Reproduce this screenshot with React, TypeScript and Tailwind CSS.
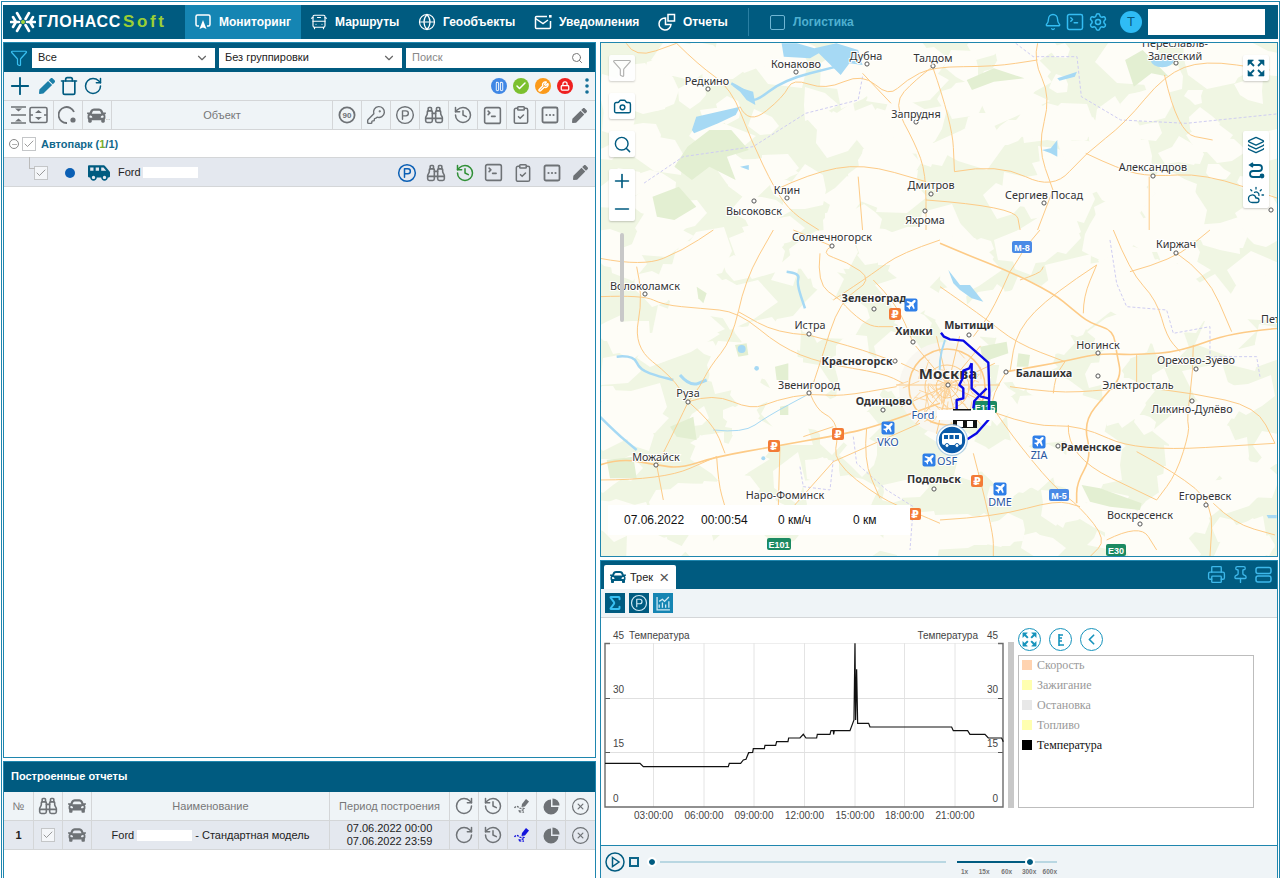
import React from "react";
import {
  Plus, RotateCw, Bell, SquareTerminal, Settings, Search, Camera, Funnel, ChevronDown, Trash,
  Layers, CloudSun, Printer, Pin, History, ClipboardCheck, KeyRound, Binoculars, CircleX, CircleParking,
  Check, Minus, Globe, BusFront, Pause, Wrench, Lock, Sigma, ChevronLeft,
} from "lucide-react";
import { FaCar, FaShuttleVan, FaPen } from "react-icons/fa";

const SANS = "font-['Liberation_Sans',Arial,sans-serif]";

type Pts = number[][];
const P = (pts: Pts) => "M" + pts.map((p) => p.join(" ")).join("L");
const S = (pts: Pts) => {
  let d = `M${pts[0][0]} ${pts[0][1]}`;
  for (let i = 1; i < pts.length - 1; i++) {
    const mx = (pts[i][0] + pts[i + 1][0]) / 2;
    const my = (pts[i][1] + pts[i + 1][1]) / 2;
    d += `Q${pts[i][0]} ${pts[i][1]} ${mx} ${my}`;
  }
  const l = pts[pts.length - 1];
  return d + `L${l[0]} ${l[1]}`;
};

let seed = 7;
const rnd = () => {
  seed = (seed * 16807) % 2147483647;
  return seed / 2147483647;
};
const patches: string[] = [];
for (let i = 0; i < 450; i++) {
  const cx = 600 + rnd() * 680;
  const cy = 40 + rnd() * 520;
  const r = 9 + rnd() * 22;
  const n = 5 + Math.floor(rnd() * 4);
  const pts: string[] = [];
  for (let k = 0; k < n; k++) {
    const a = (k / n) * Math.PI * 2;
    const rr = r * (0.5 + rnd() * 0.7);
    pts.push(`${(cx + Math.cos(a) * rr * 1.2).toFixed(0)},${(cy + Math.sin(a) * rr).toFixed(0)}`);
  }
  patches.push(pts.join(" "));
}
const streets: string[] = [];
for (let i = 0; i < 70; i++) {
  const a = rnd() * Math.PI * 2;
  const d = rnd() * 40;
  const x = 947 + Math.cos(a) * d;
  const y = 387 + Math.sin(a) * d;
  const b = rnd() * Math.PI;
  const l = 6 + rnd() * 14;
  streets.push(`M${x.toFixed(1)} ${y.toFixed(1)}L${(x + Math.cos(b) * l).toFixed(1)} ${(y + Math.sin(b) * l).toFixed(1)}`);
}

const z8: Pts[] = [
  [[0,200],[130,195],[190,225],[300,235],[415,245],[540,350],[665,400],[850,430],[910,460]],
  [[415,245],[435,150],[520,0]],
  [[415,245],[395,330],[330,410],[300,470],[265,515]],
  [[265,515],[340,490],[455,540],[530,510],[630,490],[720,500],[890,470]],
  [[265,515],[340,580],[375,670]],
  [[0,750],[190,750],[350,680]],
  [[630,490],[650,540],[700,565],[715,615],[700,695],[840,805],[950,850],[1020,880]],
  [[700,695],[960,580]],
  [[700,695],[580,830]],
  [[540,650],[535,830]],
  [[170,705],[190,810]],
  [[265,515],[200,650],[170,705]],
  [[0,85],[130,110],[250,60],[340,0]],
  [[110,110],[130,195],[100,350],[215,440],[265,515]],
  [[695,48],[660,70],[740,95],[820,150],[720,210],[660,400],[630,490]],
  [[695,48],[580,0]],
  [[820,150],[890,220],[940,340]],
  [[660,70],[650,160],[720,210]],
  [[1020,30],[900,70],[820,130],[700,210]],
  [[625,315],[530,310],[415,245]],
  [[625,315],[760,350],[885,395]],
  [[350,680],[355,760],[375,830]],
  [[720,210],[790,290],[880,290]],
  [[800,595],[790,690],[840,805]],
  [[610,620],[700,590]],
];
const z8main: Pts[] = [
  [[0,705],[60,685],[170,705],[240,715],[350,680],[520,650],[715,615],[810,595],[1020,520]],
];
const z9: Pts[] = [
  [[210,125],[240,80],[250,60],[300,0]],
  [[210,125],[160,240],[100,320]],
  [[240,150],[300,130],[310,110]],
  [[470,105],[340,190],[230,300],[210,425]],
  [[210,470],[340,490],[500,480],[590,470],[760,490],[950,530],[1005,640]],
  [[340,490],[345,440],[375,395]],
  [[520,0],[570,125],[650,210],[680,320],[720,365]],
  [[570,125],[700,90],[810,0]],
  [[710,70],[800,130],[875,305]],
  [[760,345],[760,420],[740,570],[750,600],[710,730],[650,810]],
  [[430,250],[430,200],[470,105]],
  [[170,550],[280,590],[420,585],[590,665],[1005,640]],
  [[590,665],[710,730],[820,820],[810,980]],
  [[170,550],[210,610],[340,770],[420,830],[500,930],[450,980]],
  [[385,585],[380,680],[650,810]],
  [[0,870],[170,860],[350,810],[420,830]],
  [[100,670],[160,900],[160,980]],
  [[820,820],[880,880],[1005,915]],
  [[500,930],[600,880],[650,960]],
  [[590,375],[590,470]],
  [[0,170],[130,260],[230,340],[375,395]],
  [[200,425],[150,500],[170,550]],
];
const z9main: Pts[] = [
  [[0,40],[70,70],[210,125],[340,190],[400,240],[450,280],[520,300],[530,370],[545,440],[500,490],[430,575],[455,680],[410,760],[410,820]],
  [[1020,295],[880,305],[720,365],[590,375],[475,370],[370,395],[200,425]],
];
const z2: Pts[] = [
  [[175,130],[225,195],[300,265],[345,420],[400,570],[440,640],[500,690]],
  [[320,320],[340,375],[420,290],[440,235],[515,270],[600,220],[660,290],[700,240],[760,200],[900,200],[1000,180]],
  [[600,220],[665,310]],
  [[760,200],[720,240],[670,310],[720,430],[745,520],[745,690]],
  [[760,200],[805,370],[810,515]],
  [[1000,130],[990,180],[1030,290],[1000,440],[1035,570]],
  [[810,515],[910,490],[1035,570],[1110,460],[1200,370],[1290,225],[1380,180],[1530,210]],
  [[1110,460],[1190,510],[1260,530],[1380,520],[1560,600]],
  [[1255,530],[1255,690]],
  [[1035,570],[1000,690]],
  [[400,570],[480,520],[600,490],[745,545]],
  [[590,530],[600,690]],
  [[745,600],[950,620],[960,690]],
  [[60,130],[80,175],[175,130]],
  [[1290,225],[1320,400],[1400,420]],
];
const lilac: Pts[] = [
  [[510,30],[530,160],[560,230],[680,240],[700,310],[810,290],[810,380],[950,380],[960,440]],
];
const lilac2: Pts[] = [
  [[950,130],[990,170],[1090,170],[1100,290],[1190,360],[1340,370],[1560,340]],
  [[600,230],[590,300],[470,340],[350,440],[190,470],[100,550]],
];
const lilac3: Pts[] = [
  [[600,710],[610,770],[690,780],[700,690]],
  [[760,620],[770,700],[860,780],[940,830],[930,960]],
];
const track: Pts[] = [
  [[183,98],[192,110],[210,118],[250,122],[325,188],[328,280],[325,360],[290,400],[262,418]],
  [[275,190],[275,265],[303,290],[325,295]],
  [[320,265],[300,285],[283,303],[280,325]],
  [[275,190],[268,205],[250,212],[248,235],[238,255],[250,265],[250,295],[230,300],[230,330]],
];

const Label = ({ x, y, t, b, s = 10.8, c = "#333", a = "middle" }: { x: number; y: number; t: string; b?: boolean; s?: number; c?: string; a?: "middle" | "start" }) => (
  <text x={x} y={y} textAnchor={a} fontSize={s} fontWeight={b ? 700 : 400} fill={c} stroke="#ffffff" strokeWidth={2} paintOrder="stroke" fontFamily="'Noto Sans','Open Sans',sans-serif">{t}</text>
);

const labels: [number, number, string, boolean?][] = [
  [1175,47,"Переславль-"],[1175,60,"Залесский"],[796,68,"Конаково"],[866,60,"Дубна"],[933,62,"Талдом"],[707,85,"Редкино"],
  [916,118,"Запрудня"],[787,194,"Клин"],[754,215,"Высоковск"],[931,189,"Дмитров"],[925,224,"Яхрома"],[1044,199,"Сергиев Посад"],
  [1153,171,"Александров"],[832,241,"Солнечногорск"],[645,290,"Волоколамск"],[810,329,"Истра"],[874,302,"Зеленоград",true],
  [914,335,"Химки",true],[969,329,"Мытищи",true],[857,365,"Красногорск",true],[1044,377,"Балашиха",true],[1098,349,"Ногинск"],
  [1138,389,"Электросталь"],[1196,364,"Орехово-Зуево"],[1176,248,"Киржач"],[809,389,"Звенигород"],[688,397,"Руза"],[884,405,"Одинцово",true],
  [1192,413,"Ликино-Дулёво"],[1091,451,"Раменское",true],[656,461,"Можайск"],[934,483,"Подольск",true],[785,499,"Наро-Фоминск"],
  [1205,500,"Егорьевск"],[1140,519,"Воскресенск"],
];
const dots: number[][] = [[1176,63],[796,72],[867,64],[933,66],[708,89],[916,122],[787,198],[754,201],[931,194],[925,211],[1044,203],[1153,176],[832,246],[645,294],[809,334],[874,309],[913,342],[969,335],[895,361],[948,385],[1006,372],[1098,353],[1098,376],[1196,369],[1176,253],[809,393],[688,402],[883,410],[1192,401],[1058,446],[656,465],[934,489],[1206,505],[1140,524],[1271,210]];

const Plane = ({ x, y }: { x: number; y: number }) => (
  <g transform={`translate(${x} ${y})`}>
    <rect x={-6.5} y={-6.5} width={13} height={13} rx={2} fill="#2f7fe8" />
    <path d="M4.5-4.5c-.8-.8-1.7-.4-2.4.3L.6-2.7-3.6-4l-.9.9 3.4 2.2L-2.8.8-4.2.6l-.7.7 2.1 1.2L-1.6 4.6l.7-.7-.2-1.4L.6.8 2.8 4.2l.9-.9L2.4-.9l1.5-1.5c.7-.7 1.1-2.3.6-2.1z" fill="#fff" />
  </g>
);
const Rub = ({ x, y }: { x: number; y: number }) => (
  <g transform={`translate(${x} ${y})`}>
    <rect x={-6} y={-6} width={12} height={12} rx={2} fill="#f37b36" />
    <text x={0} y={4} textAnchor="middle" fontSize={11} fontWeight={700} fill="#fff" fontFamily="'DejaVu Sans',sans-serif">₽</text>
  </g>
);
const Shield = ({ x, y, t, c, w = 20 }: { x: number; y: number; t: string; c: string; w?: number }) => (
  <g transform={`translate(${x} ${y})`}>
    <rect x={-w / 2} y={-6} width={w} height={12} rx={2} fill={c} />
    <text x={0} y={3.5} textAnchor="middle" fontSize={9} fontWeight={700} fill="#fff" fontFamily="'Liberation Sans',sans-serif">{t}</text>
  </g>
);

const Roads = ({ list, t, w = 1 }: { list: Pts[]; t: string; w?: number }) => (
  <g transform={t}>
    {list.map((p, i) => (
      <path key={i} d={S(p)} fill="none" stroke="#fdcb87" strokeWidth={w} strokeLinejoin="round" vectorEffect="non-scaling-stroke" />
    ))}
  </g>
);
const Dash = ({ list, t }: { list: Pts[]; t: string }) => (
  <g transform={t}>
    {list.map((p, i) => (
      <path key={i} d={P(p)} fill="none" stroke="#cfcdf2" strokeWidth={1} strokeDasharray="3 2" vectorEffect="non-scaling-stroke" />
    ))}
  </g>
);

const T8 = "translate(600 230) scale(.3333)";
const T9 = "translate(940 230) scale(.3333)";
const T2 = "translate(600 0) scale(.4376 .3333)";

function MapDrawing() {
  const spokes: React.ReactNode[] = [];
  for (let i = 0; i < 14; i++) {
    const a = (i / 14) * Math.PI * 2;
    spokes.push(<line key={i} x1={948} y1={385} x2={948 + Math.cos(a) * 52} y2={385 + Math.sin(a) * 50} stroke="#fdcb87" strokeWidth={1} />);
  }
  return (
    <svg viewBox="601 43 676 513" className="block w-full h-full">
      <rect x={600} y={43} width={678} height={515} fill="#f0f6e3" />
      {patches.map((p, i) => (
        <polygon key={i} points={p} fill="#fefdf7" />
      ))}
      <g fill="#e3efd2">
        <g transform={T2}>
          <polygon points="838,240 900,205 970,235 900,245 850,270" />
          <polygon points="1200,180 1240,150 1300,230 1260,220 1220,260" />
          <polygon points="200,440 250,390 300,390 340,450 290,470 310,540 250,500 210,540 170,500" />
          <polygon points="120,590 180,560 220,620 170,660 130,650" />
        </g>
        <g transform={T8}>
          <polygon points="20,690 100,680 110,745 30,745" />
          <polygon points="210,590 280,560 290,630 230,620" />
          <polygon points="525,410 565,400 565,450 530,450" />
          <polygon points="540,530 565,525 565,555 540,555" />
          <polygon points="290,170 320,190 310,220 295,205" />
          <polygon points="405,345 440,340 445,375 415,380" />
        </g>
        <g transform={T9}>
          <polygon points="425,765 480,775 605,820 600,840 510,830 450,815" />
          <polygon points="120,350 200,335 205,370 130,395" />
          <polygon points="235,370 270,375 265,410 230,410" />
        </g>
      </g>
      <ellipse cx={945} cy={388} rx={46} ry={46} fill="#f9f7f1" />
      <Dash list={lilac} t={T9} />
      <Dash list={lilac2} t={T2} />
      <Dash list={lilac3} t={T8} />
      <g fill="#a6d9f4" stroke="none">
        <g transform={T2}>
          <polygon points="210,390 220,350 320,320 310,345 270,370 215,400" />
          <polygon points="415,130 420,170 480,175 500,160 550,225 570,190 600,195 590,150 540,130 490,145 450,130" />
          <polygon points="300,255 350,275 355,315 335,300 320,275" />
          <ellipse cx={1285} cy={182} rx={26} ry={20} />
          <polygon points="1045,235 1090,215 1085,230 1050,242" />
          <polygon points="1010,450 1030,445 1045,420 1045,470 1030,460" />
          <polygon points="320,500 340,495 340,510" />
        </g>
        <g transform={T8}>
          <circle cx={425} cy={357} r={12} />
          <circle cx={470} cy={415} r={7} />
          <circle cx={490} cy={685} r={6} />
        </g>
        <g transform={T9}>
          <polygon points="25,120 60,165 90,165 130,215 95,205 60,180 40,160" />
          <polygon points="980,855 1010,855 1010,865 985,865" />
        </g>
      </g>
      <g transform={T8} fill="none" stroke="#a6d9f4">
        <path d={S([[0,560],[50,610],[110,660]])} vectorEffect="non-scaling-stroke" strokeWidth={2.5} />
        <path d={S([[50,380],[100,375],[120,420],[180,440],[220,450]])} vectorEffect="non-scaling-stroke" strokeWidth={2.5} />
        <path d={S([[240,435],[270,470],[320,450]])} vectorEffect="non-scaling-stroke" strokeWidth={3} />
        <path d={S([[560,125],[600,130],[590,160],[615,235]])} vectorEffect="non-scaling-stroke" strokeWidth={2.5} />
        <path d={S([[340,600],[430,610],[500,560],[630,490]])} vectorEffect="non-scaling-stroke" strokeWidth={1} />
      </g>
      <g transform={T2} fill="none" stroke="#a6d9f4">
        <path d={S([[300,250],[345,280],[350,310],[420,240],[540,200]])} vectorEffect="non-scaling-stroke" strokeWidth={2.5} />
      </g>
      <Roads list={z8} t={T8} />
      <Roads list={z9} t={T9} />
      <Roads list={z2} t={T2} />
      <Roads list={z8main} t={T8} w={1.6} />
      <Roads list={z9main} t={T9} w={1.6} />
      {spokes}
      <path d={streets.join("")} fill="none" stroke="#fdd49c" strokeWidth={0.9} />
      <circle cx={947} cy={387} r={38} fill="none" stroke="#fdcb87" strokeWidth={1.6} />
      <circle cx={947} cy={387} r={22} fill="none" stroke="#fdcb87" strokeWidth={1} />
      <circle cx={947} cy={387} r={11} fill="none" stroke="#fdcb87" strokeWidth={1} />
      <path d="M945 340 q-8 22 -4 40" fill="none" stroke="#a6d9f4" strokeWidth={2} />
      {dots.map(([x, y], i) => (
        <circle key={i} cx={x} cy={y} r={2.1} fill="#fff" stroke="#555" strokeWidth={1} />
      ))}
      {labels.map(([x, y, t, b], i) => (
        <Label key={i} x={x} y={y} t={t} b={b} />
      ))}
      <Label x={948} y={379} t="Москва" b s={15} />
      <Label x={1261} y={323} t="Пет" a="start" />
      <Label x={923} y={419} t="Ford" c="#28569f" />
      <Label x={888} y={446} t="VKO" c="#28569f" />
      <Label x={947} y={465} t="OSF" c="#28569f" />
      <Label x={1039} y={459} t="ZIA" c="#28569f" />
      <Label x={1000} y={506} t="DME" c="#28569f" />
      <Plane x={911} y={305} />
      <Plane x={888} y={428} />
      <Plane x={929} y={460} />
      <Plane x={1039} y={442} />
      <Plane x={1000} y={489} />
      <Rub x={895} y={314} />
      <Rub x={838} y={434} />
      <Rub x={774} y={446} />
      <Rub x={915} y={514} />
      <Rub x={977} y={481} />
      <Shield x={1022} y={247} t="M-8" c="#4a8ae6" />
      <Shield x={1059} y={495} t="M-5" c="#4a8ae6" />
      <Shield x={779} y={544} t="E101" c="#1b8a62" w={24} />
      <Shield x={1116} y={550} t="E30" c="#1b8a62" />
      <Shield x={985} y={407} t="E115" c="#1b8a62" w={24} />
      <g transform="translate(880 300) scale(.3333)">
        {track.map((p, i) => (
          <path key={i} d={P(p)} fill="none" stroke="#0a0ae6" strokeWidth={2.4} strokeLinejoin="round" vectorEffect="non-scaling-stroke" />
        ))}
      </g>
      <rect x={937} y={410} width={58} height={10} fill="#fff" />
      <rect x={953} y={420} width={24} height={8} fill="#111" />
      <rect x={957} y={421} width={6} height={6} fill="#fff" />
      <rect x={967} y={421} width={6} height={6} fill="#fff" />
      <rect x={953} y={409} width={18} height={1.5} fill="#111" />
      <circle cx={952} cy={440} r={16} fill="#9cc3e6" fillOpacity={0.75} />
      <circle cx={952} cy={440} r={14} fill="#0a5aa8" stroke="#fff" strokeWidth={1.5} />
      <g transform="translate(942 433)" fill="#fff">
        <rect x={0} y={0} width={20} height={12} rx={2.5} />
        <circle cx={5} cy={12.5} r={2} stroke="#0a5aa8" />
        <circle cx={15} cy={12.5} r={2} stroke="#0a5aa8" />
        <rect x={2} y={2} width={4} height={4} fill="#0a5aa8" />
        <rect x={7.5} y={2} width={4} height={4} fill="#0a5aa8" />
        <rect x={13} y={2} width={4} height={4} fill="#0a5aa8" />
      </g>
    </svg>
  );
}

const chart = [[15,430],[120,430],[130,440],[385,440],[388,430],[422,430],[430,420],[438,418],[446,398],[458,397],[460,386],[493,386],[495,376],[527,376],[530,365],[564,365],[566,354],[600,354],[610,343],[618,354],[650,354],[652,343],[690,343],[693,332],[700,332],[701,343],[703,332],[750,332],[762,300],[765,70],[767,300],[770,148],[773,310],[806,310],[810,321],[1055,321],[1060,332],[1103,332],[1110,343],[1155,343],[1165,354],[1205,354],[1210,365]];

function Chart() {
  const xs = [653.5, 704, 754, 804.5, 855, 904.5, 955];
  const tl = ["03:00:00", "06:00:00", "09:00:00", "12:00:00", "15:00:00", "18:00:00", "21:00:00"];
  const F = { fontFamily: "'Liberation Sans',sans-serif", fontSize: 10, fill: "#444" };
  return (
    <svg width={412} height={206} viewBox="600 620 412 206" className="block shrink-0">
      <rect x={605} y={643} width={398} height={1} fill="#eee" />
      {xs.map((x) => (
        <line key={x} x1={x} x2={x} y1={643} y2={807} stroke="#e4e4e4" />
      ))}
      {[698.5, 752.5].map((y) => (
        <g key={y}>
          <line x1={605} x2={1003} y1={y} y2={y} stroke="#e0e0e0" />
          <line x1={605} x2={610} y1={y} y2={y} stroke="#555" />
          <line x1={998} x2={1003} y1={y} y2={y} stroke="#555" />
        </g>
      ))}
      <path d="M610 643.5H605V807H1003V643.5H998" fill="none" stroke="#6c6c6c" strokeWidth={1.4} />
      <g transform="translate(600 620) scale(.3333)">
        <path d={P(chart)} fill="none" stroke="#111" strokeWidth={1.2} vectorEffect="non-scaling-stroke" />
      </g>
      <text x={613} y={639} {...F}>45</text>
      <text x={629} y={639} {...F}>Температура</text>
      <text x={978} y={639} textAnchor="end" {...F}>Температура</text>
      <text x={998} y={639} textAnchor="end" {...F}>45</text>
      {[["30", 693], ["15", 747], ["0", 802]].map(([t, y]) => (
        <g key={t as string}>
          <text x={613} y={y as number} {...F}>{t}</text>
          <text x={998} y={y as number} textAnchor="end" {...F}>{t}</text>
        </g>
      ))}
      {xs.map((x, i) => (
        <text key={x} x={x} y={819} textAnchor="middle" {...F}>{tl[i]}</text>
      ))}
    </svg>
  );
}

const G = "#6e7276";
const DotsBox = ({ c = G, s = 18 }: { c?: string; s?: number }) => (
  <svg width={s} height={s} viewBox="0 0 18 18" fill="none">
    <rect x={1.5} y={1.5} width={15} height={15} rx={1.5} stroke={c} strokeWidth={1.8} />
    <circle cx={5.5} cy={9} r={1.1} fill={c} /><circle cx={9} cy={9} r={1.1} fill={c} /><circle cx={12.5} cy={9} r={1.1} fill={c} />
  </svg>
);
const Speed90 = () => (
  <svg width={18} height={18} viewBox="0 0 18 18">
    <circle cx={9} cy={9} r={7.6} fill="none" stroke={G} strokeWidth={1.8} />
    <text x={9} y={11.8} textAnchor="middle" fontSize={8} fontWeight={700} fill={G} fontFamily="'Liberation Sans',sans-serif">90</text>
  </svg>
);
const PieIcon = () => (
  <svg width={17} height={17} viewBox="0 0 17 17" fill={G}>
    <path d="M8 1.5A7.5 7.5 0 1 0 15.5 9H8z" /><path d="M9.5 0.5V7.5H16.5A7 7 0 0 0 9.5 .5z" />
  </svg>
);
const MapPen = ({ c = G }: { c?: string }) => (
  <svg width={18} height={18} viewBox="0 0 18 18" fill="none">
    <path d="M9 7l4-5 3 2.5-4 5-3.5.5z" fill={c} />
    <path d="M1.5 11c2-3 3.5-1 5 0s3-.5 4.5.5-3 2-5 2.5 3 1.5 5 1" stroke={c} strokeWidth={1.3} strokeDasharray="2 1" />
  </svg>
);

const Cell = ({ className = "w-[29px]", children }: { className?: string; children?: React.ReactNode }) => (
  <div className={`${className} shrink-0 h-full flex items-center justify-center border-r border-[#d4d6d8]`}>{children}</div>
);

const CheckBox = () => (
  <span className="w-[14px] h-[14px] bg-white/60 border border-[#c4c6c8] flex items-center justify-center shrink-0">
    <Check size={12} color="#666" strokeWidth={1.3} />
  </span>
);

const Dot = ({ c, children }: { c: string; children: React.ReactNode }) => (
  <span className={`w-4 h-4 rounded-full flex items-center justify-center ${c}`}>{children}</span>
);

const NavItem = ({ icon, label, className = "" }: { icon: React.ReactNode; label: string; className?: string }) => (
  <div className={`h-full flex items-center gap-[7px] text-white font-bold text-[12px] ${className}`}>
    {icon}
    <span>{label}</span>
  </div>
);

const MonitorIcon = () => (
  <svg width={18} height={18} viewBox="0 0 18 18" fill="none" stroke="#fff" strokeWidth={1.5}>
    <path d="M5 13H3.5A1.5 1.5 0 0 1 2 11.5v-8A1.5 1.5 0 0 1 3.5 2h11A1.5 1.5 0 0 1 16 3.5v8a1.5 1.5 0 0 1-1.5 1.5H13" />
    <path d="M9 7l3.5 9L9 14.5 5.5 16z" fill="#fff" stroke="none" />
  </svg>
);
const MailIcon = () => (
  <svg width={18} height={18} viewBox="0 0 18 18" fill="none" stroke="#fff" strokeWidth={1.5}>
    <path d="M13 3.5H2.5A1 1 0 0 0 1.5 4.5v10a1 1 0 0 0 1 1h13a1 1 0 0 0 1-1V8" />
    <path d="M1.5 5.5L9 10.5l5-3.5" />
    <rect x={15} y={2} width={2.6} height={2.6} fill="#fff" stroke="none" />
  </svg>
);
const ReportIcon = () => (
  <svg width={18} height={18} viewBox="0 0 18 18" fill="none" stroke="#fff" strokeWidth={1.5}>
    <path d="M7.5 5A6 6 0 1 0 13 11.5H7.5z" />
    <rect x={10} y={1.5} width={6.5} height={6.5} />
  </svg>
);

const MapBtn = ({ children, className = "" }: { children: React.ReactNode; className?: string }) => (
  <div className={`w-[26px] bg-white rounded-[2px] shadow-[0_1px_2px_rgba(0,0,0,0.2)] flex flex-col items-center justify-center ${className}`}>{children}</div>
);

const BLUE = "#005b80";

const Expand = ({ c = BLUE, s = 18, w = 1.8 }: { c?: string; s?: number; w?: number }) => (
  <svg width={s} height={s} viewBox="0 0 18 18" fill={c} stroke={c} strokeWidth={w}>
    <path d="M1 6.5V1h5.5zM17 6.5V1h-5.5zM1 11.5V17h5.5zM17 11.5V17h-5.5z" strokeWidth={0.6} />
    <path d="M3 3l4 4M15 3l-4 4M3 15l4-4M15 15l-4-4" />
  </svg>
);

const Logo = () => (
  <svg width={26} height={22} viewBox="0 0 26 22" fill="none" stroke="#fff" strokeWidth={2.6} strokeLinecap="round">
    <path d="M1 11h8M17 11h8M7 2l3.5 6M15.5 14l3.5 6M19 2l-3.5 6M10.5 14L7 20M3 6l3 5-3 5M23 6l-3 5 3 5" />
    <circle cx={13} cy={11} r={2} fill="#a5d63a" stroke="none" />
  </svg>
);

const Track = () => (
  <div className="h-[28px] shrink-0 bg-[#005b80] flex items-end pl-[3px] pr-[5px]">
    <div className="h-[24px] w-[72px] bg-white rounded-t-[2px] flex items-center pl-[6px] gap-[4px] text-[11px] text-[#222]">
      <FaCar size={16} color={BLUE} />
      <span>Трек</span>
      <span className="text-[17px] text-[#555] leading-none ml-[2px]">×</span>
    </div>
    <div className="ml-auto h-full flex items-center gap-[5px] pb-[1px]">
      <Printer size={19} color="#3db8ea" strokeWidth={1.7} />
      <Pin size={19} color="#3db8ea" strokeWidth={1.7} />
      <svg width={17} height={17} viewBox="0 0 17 17" fill="none" stroke="#3db8ea" strokeWidth={1.5}>
        <rect x={1} y={1.5} width={15} height={6} rx={2} /><rect x={1} y={10} width={15} height={6} rx={2} />
      </svg>
    </div>
  </div>
);

const CircleBtn = ({ children }: { children: React.ReactNode }) => (
  <span className="w-[23px] h-[23px] rounded-full border-[1.5px] border-[#1693bc] flex items-center justify-center bg-white">{children}</span>
);

const legend: [string, string, string][] = [
  ["Скорость", "bg-[#ffd3b0]", "text-[#999]"],
  ["Зажигание", "bg-[#ffffb0]", "text-[#999]"],
  ["Остановка", "bg-[#e8e8e8]", "text-[#999]"],
  ["Топливо", "bg-[#ffffb0]", "text-[#999]"],
  ["Температура", "bg-black", "text-[#111]"],
];

const HistoryI = ({ c = G, s = 20 }: { c?: string; s?: number }) => <History size={s} color={c} strokeWidth={1.8} />;

export default function App() {
  return (
    <div className={`w-[1283px] h-[878px] bg-white overflow-hidden ${SANS}`}>
      <div className="ml-px mt-px w-[1279px] h-[877px] border border-b-0 border-[#1f86ae] pt-[3px] px-px flex flex-col">
        {/* header */}
        <header className="h-[34px] shrink-0 bg-[#005b80] flex items-center">
          <div className="w-[182px] h-full flex items-center pl-[7px] gap-[2px]">
            <Logo />
            <span className="text-white font-bold text-[16px] tracking-[0.7px]">ГЛОНАСС</span>
            <span className="text-[#9ccf35] font-bold text-[17px] tracking-[2.6px]">Soft</span>
          </div>
          <NavItem className="w-[116px] pl-[9px] bg-[#1585b3]" icon={<MonitorIcon />} label="Мониторинг" />
          <NavItem className="w-[108px] pl-[9px]" icon={<BusFront size={18} strokeWidth={1.5} />} label="Маршруты" />
          <NavItem className="w-[116px] pl-[9px]" icon={<Globe size={18} strokeWidth={1.6} />} label="Геообъекты" />
          <NavItem className="w-[124px] pl-[9px]" icon={<MailIcon />} label="Уведомления" />
          <NavItem className="w-[99px] pl-[9px]" icon={<ReportIcon />} label="Отчеты" />
          <div className="w-px h-[28px] bg-[#2a7fa3]" />
          <div className="ml-[21px] w-[15px] h-[15px] border-[1.5px] border-[#6fb6d4] rounded-[2px]" />
          <span className="ml-[8px] text-[#4fb0d0] font-bold text-[12px]">Логистика</span>
          <div className="ml-auto flex items-center">
            <div className="flex items-center gap-[3px]">
              <Bell size={18} color="#34bdf2" strokeWidth={1.8} />
              <SquareTerminal size={20} color="#34bdf2" strokeWidth={1.8} />
              <Settings size={20} color="#34bdf2" strokeWidth={1.8} />
            </div>
            <div className="ml-[12px] w-[22px] h-[22px] rounded-full bg-[#2fbcf5] text-[#075a7d] text-[13px] flex items-center justify-center">T</div>
            <div className="ml-[6px] mr-[13px] w-[117px] h-[26px] bg-white" />
          </div>
        </header>

        <div className="mt-[3px] flex-1 min-h-0 flex gap-[4px] overflow-hidden">
          {/* left */}
          <div className="w-[593px] shrink-0 flex flex-col gap-[3px]">
            <section className="h-[716px] border border-[#1f86ae] flex flex-col bg-white">
              <div className="h-[29px] shrink-0 bg-[#005b80] flex items-center pl-[6px] gap-[4px] text-[11px] text-[#222]">
                <Funnel size={18} color="#39c0f2" strokeWidth={1.6} />
                <div className="w-[183px] h-[20px] bg-white flex items-center justify-between px-[6px]">
                  <span>Все</span><ChevronDown size={14} color="#666" />
                </div>
                <div className="w-[183px] h-[20px] bg-white flex items-center justify-between px-[6px]">
                  <span>Без группировки</span><ChevronDown size={14} color="#666" />
                </div>
                <div className="w-[183px] h-[20px] bg-white flex items-center justify-between px-[6px] text-[#888]">
                  <span>Поиск</span><Search size={12} color="#777" />
                </div>
              </div>
              <div className="h-[28px] shrink-0 bg-[#eff4f7] flex items-center pl-[6px] pr-[5px]">
                <div className="flex items-center">
                  <Plus size={28} color={BLUE} strokeWidth={1.6} className="-mx-[4px]" />
                  <FaPen size={16} color="#1b7fa8" className="ml-[9px]" />
                  <Trash size={20} color={BLUE} strokeWidth={2} className="ml-[4px]" />
                  <RotateCw size={20} color={BLUE} strokeWidth={1.8} className="ml-[4px]" />
                </div>
                <div className="ml-auto flex items-center gap-[6px]">
                  <Dot c="bg-[#3f87e5]"><Pause size={11} color="#fff" /></Dot>
                  <Dot c="bg-[#7cc02f]"><Check size={12} color="#fff" strokeWidth={3} /></Dot>
                  <Dot c="bg-[#fb9a1a]"><Wrench size={11} color="#fff" strokeWidth={3} /></Dot>
                  <Dot c="bg-[#ee2020]"><Lock size={10} color="#fff" strokeWidth={3} /></Dot>
                  <svg width={6} height={18} viewBox="0 0 6 18" fill="#146f97" className="ml-[5px]">
                    <circle cx={3} cy={3} r={1.8} /><circle cx={3} cy={9} r={1.8} /><circle cx={3} cy={15} r={1.8} />
                  </svg>
                </div>
              </div>
              <div className="h-[30px] shrink-0 bg-[#eff4f7] border-y border-[#d4d6d8] flex items-center text-[11px] text-[#777]">
                <Cell className="w-[50px]">
                  <svg width={38} height={18} viewBox="0 0 38 18" fill="none" stroke={G} strokeWidth={1.6}>
                    <path d="M1 1h15M1 17h15M1 9h15" /><path d="M5 2.5l3.5 3L12 2.5zM5 15.5l3.5-3 3.5 3z" fill={G} stroke="none" />
                    <rect x={20} y={1.5} width={17} height={15} rx={1.5} />
                    <path d="M25 7l3.5-3L32 7zM25 11l3.5 3L32 11z" fill={G} stroke="none" />
                    <path d="M20 9h3M34 9h3" />
                  </svg>
                </Cell>
                <Cell>
                  <svg width={20} height={20} viewBox="0 0 20 20" fill="none" stroke={G} strokeWidth={1.8}>
                    <path d="M16 7A8 8 0 1 0 9 18" /><circle cx={15} cy={15} r={2.6} fill={G} stroke="none" />
                  </svg>
                </Cell>
                <Cell><FaCar size={19} color={G} /><span className="text-[8px] text-[#999] leading-none mt-[6px] -mr-[3px]">..</span></Cell>
                <Cell className="w-[221px]">Объект</Cell>
                <Cell><Speed90 /></Cell>
                <Cell><KeyRound size={20} color={G} strokeWidth={1.7} /></Cell>
                <Cell><CircleParking size={20} color={G} strokeWidth={1.7} /></Cell>
                <Cell><Binoculars size={20} color={G} strokeWidth={1.9} /></Cell>
                <Cell><HistoryI /></Cell>
                <Cell><SquareTerminal size={21} color={G} strokeWidth={1.8} /></Cell>
                <Cell><ClipboardCheck size={20} color={G} strokeWidth={1.8} /></Cell>
                <Cell><DotsBox /></Cell>
                <Cell className="w-[29px] border-r-0"><FaPen size={15} color={G} /></Cell>
              </div>
              <div className="h-[28px] shrink-0 border-b border-[#d4d6d8] flex items-center pt-px pl-[5px] gap-[3px] text-[11px] font-bold text-[#12688c]">
                <span className="w-[10px] h-[10px] rounded-full border border-[#888] flex items-center justify-center">
                  <Minus size={7} color="#777" />
                </span>
                <CheckBox />
                <span className="ml-[2px]">Автопарк (<span className="text-[#79ad2d]">1</span>/1)</span>
              </div>
              <div className="relative h-[29px] shrink-0 bg-[#e4e8ef] border-b border-[#d4d6d8] flex items-center pt-px text-[11px] text-[#222]">
                <span className="absolute left-[25px] -top-[1px] w-[6px] h-[12px] border-l border-b border-[#bbb]" />
                <div className="ml-[30px]"><CheckBox /></div>
                <span className="ml-[17px] w-[10px] h-[10px] rounded-full bg-[#0b5fb4]" />
                <FaShuttleVan size={22} color={BLUE} className="ml-[13px]" />
                <span className="ml-[8px]">Ford</span>
                <span className="ml-[2px] w-[55px] h-[11px] bg-white" />
                <div className="ml-auto flex items-center h-full">
                  <Cell className="w-[29px] border-r-0"><CircleParking size={20} color="#0b5fb4" strokeWidth={1.8} /></Cell>
                  <Cell className="w-[29px] border-r-0"><Binoculars size={20} color={G} strokeWidth={1.9} /></Cell>
                  <Cell className="w-[29px] border-r-0"><HistoryI c="#2f8f35" /></Cell>
                  <Cell className="w-[29px] border-r-0"><SquareTerminal size={21} color={G} strokeWidth={1.8} /></Cell>
                  <Cell className="w-[29px] border-r-0"><ClipboardCheck size={20} color={G} strokeWidth={1.8} /></Cell>
                  <Cell className="w-[29px] border-r-0"><DotsBox /></Cell>
                  <Cell className="w-[29px] border-r-0"><FaPen size={15} color={G} /></Cell>
                </div>
              </div>
            </section>
            <section className="flex-1 border border-[#1f86ae] border-b-0 flex flex-col bg-white">
              <div className="h-[30px] shrink-0 bg-[#005b80] flex items-center pl-[7px] pb-px text-white font-bold text-[11px]">Построенные отчеты</div>
              <div className="h-[29px] shrink-0 bg-[#eff4f7] border-b border-[#d4d6d8] flex items-center text-[11px] text-[#777]">
                <Cell className="w-[30px]">№</Cell>
                <Cell><Binoculars size={20} color={G} strokeWidth={1.9} /></Cell>
                <Cell><FaCar size={18} color={G} /></Cell>
                <Cell className="w-[238px]">Наименование</Cell>
                <Cell className="w-[120px]">Период построения</Cell>
                <Cell><RotateCw size={20} color={G} strokeWidth={1.8} /></Cell>
                <Cell><HistoryI /></Cell>
                <Cell><MapPen /></Cell>
                <Cell><PieIcon /></Cell>
                <Cell className="w-[29px] border-r-0"><CircleX size={19} color={G} strokeWidth={1.5} /></Cell>
              </div>
              <div className="h-[29px] shrink-0 bg-[#e4e8ef] border-b border-[#d4d6d8] flex items-center text-[11px] text-[#222]">
                <Cell className="w-[30px]"><span className="font-bold">1</span></Cell>
                <Cell><CheckBox /></Cell>
                <Cell><FaCar size={18} color={G} /></Cell>
                <Cell className="w-[238px]">
                  <span>Ford</span><span className="mx-[3px] w-[55px] h-[11px] bg-white" /><span>- Стандартная модель</span>
                </Cell>
                <Cell className="w-[120px]">
                  <div className="text-center leading-[13px]">07.06.2022 00:00<br />07.06.2022 23:59</div>
                </Cell>
                <Cell><RotateCw size={20} color={G} strokeWidth={1.8} /></Cell>
                <Cell><HistoryI /></Cell>
                <Cell><MapPen c="#1414dc" /></Cell>
                <Cell><PieIcon /></Cell>
                <Cell className="w-[29px] border-r-0"><CircleX size={19} color={G} strokeWidth={1.5} /></Cell>
              </div>
            </section>
          </div>

          {/* right */}
          <div className="flex-1 min-w-0 flex flex-col gap-[3px]">
            <section className="relative h-[515px] shrink-0 border border-[#1f86ae] overflow-hidden">
              <MapDrawing />
              <div className="absolute left-[8px] top-[12px] flex flex-col gap-[12px]">
                <MapBtn className="h-[26px] opacity-90"><Funnel size={20} color="#aaa" strokeWidth={1.4} /></MapBtn>
                <MapBtn className="h-[26px]"><Camera size={19} color={BLUE} strokeWidth={1.8} /></MapBtn>
                <MapBtn className="h-[26px]"><Search size={19} color={BLUE} strokeWidth={1.8} /></MapBtn>
                <MapBtn className="h-[52px] gap-[6px]"><Plus size={22} color={BLUE} strokeWidth={1.8} /><Minus size={22} color={BLUE} strokeWidth={1.8} /></MapBtn>
              </div>
              <div className="absolute left-[19px] top-[190px] w-[4px] h-[89px] bg-[#c8c8c8] rounded-[2px]" />
              <div className="absolute right-[8px] top-[12px]"><MapBtn className="h-[26px]"><Expand /></MapBtn></div>
              <div className="absolute right-[8px] top-[88px]">
                <MapBtn className="h-[77px] gap-[7px]">
                  <Layers size={18} color={BLUE} strokeWidth={1.7} />
                  <svg width={18} height={18} viewBox="0 0 18 18" fill="none" stroke={BLUE} strokeWidth={1.8}>
                    <path d="M6 2L3 4l3 2M3 4h9a3 3 0 0 1 0 6H6a3 3 0 0 0 0 6h7" /><circle cx={15} cy={15} r={1.5} fill={BLUE} />
                  </svg>
                  <CloudSun size={18} color={BLUE} strokeWidth={1.7} />
                </MapBtn>
              </div>
              <div className="absolute left-[7px] top-[462px] w-[302px] h-[30px] bg-white flex items-center text-[12px] text-[#111]">
                <span className="ml-[16px] w-[77px]">07.06.2022</span>
                <span className="w-[77px]">00:00:54</span>
                <span className="w-[75px]">0 км/ч</span>
                <span>0 км</span>
              </div>
            </section>
            <section className="flex-1 min-h-0 border border-[#1f86ae] border-b-0 flex flex-col bg-white">
              <Track />
              <div className="h-[29px] shrink-0 bg-[#eff4f7] border-b border-[#d4d6d8] flex items-center pl-[4px] gap-[4px]">
                <span className="w-[20px] h-[20px] bg-[#005b80] flex items-center justify-center"><Sigma size={18} color="#39c0f2" strokeWidth={2.6} /></span>
                <span className="w-[20px] h-[20px] bg-[#005b80] flex items-center justify-center"><CircleParking size={18} color="#cfe9f4" strokeWidth={1.6} /></span>
                <span className="w-[20px] h-[20px] bg-[#1585b3] flex items-center justify-center">
                  <svg width={15} height={15} viewBox="0 0 14 14" fill="none" stroke="#cfe9f4" strokeWidth={1.2}>
                    <path d="M1 1v12h12M3 11V8M6 11V6M9 11V8M12 11V5M3 5l3-2 2 2 4-4" />
                  </svg>
                </span>
              </div>
              <div className="flex-1 min-h-0 flex">
                <div className="pt-[2px] -ml-px"><Chart /></div>
                <div className="w-[6px] h-[166px] bg-[#c8c8c8] mt-[24px] -ml-[4px]" />
                <div className="ml-[4px] mt-[10px] w-[236px]">
                  <div className="flex gap-[8px]">
                    <CircleBtn><Expand c="#1693bc" s={15} w={2.4} /></CircleBtn>
                    <CircleBtn>
                      <svg width={12} height={14} viewBox="0 0 12 14" fill="none" stroke="#1693bc" strokeWidth={1.6}><path d="M4 1v12M4 2h4M4 5h3M4 8h3M4 12h5" /></svg>
                    </CircleBtn>
                    <CircleBtn><ChevronLeft size={17} color="#1693bc" strokeWidth={2.4} /></CircleBtn>
                  </div>
                  <div className="mt-[4px] h-[153px] border border-[#bdbdbd] pl-[3px] font-['Liberation_Serif',serif] text-[12px]">
                    <div className="-mt-px">
                      {legend.map(([t, bg, c]) => (
                        <div key={t} className={`h-[20px] flex items-center gap-[5px] ${c}`}>
                          <span className={`w-[10px] h-[10px] ${bg}`} />
                          <span>{t}</span>
                        </div>
                      ))}
                    </div>
                  </div>
                </div>
              </div>
              <div className="h-[33px] shrink-0 bg-[#eff4f7] border-t border-[#1f86ae] flex items-center pl-[4px]">
                <svg width={20} height={20} viewBox="0 0 20 20" fill="none" stroke={BLUE} strokeWidth={1.5}>
                  <circle cx={10} cy={10} r={9} /><path d="M7.5 5.5L14 10l-6.5 4.5z" />
                </svg>
                <span className="ml-[4px] w-[10px] h-[10px] border-2 border-[#0e6689]" />
                <span className="ml-[10px] w-[6px] h-[6px] rounded-full bg-[#005b80] outline-2 outline-white" />
                <span className="ml-[5px] w-[286px] h-[2px] bg-[#b9d7e2]" />
                <div className="ml-[11px] w-[100px] relative h-full">
                  <div className="absolute top-[15px] left-0 w-[73px] h-[2px] bg-[#005b80]" />
                  <div className="absolute top-[15px] left-[73px] w-[27px] h-[2px] bg-[#b9d7e2]" />
                  <div className="absolute top-[13px] left-[70px] w-[6px] h-[6px] rounded-full bg-[#005b80] outline-2 outline-white" />
                  <div className="absolute top-[22px] left-0 w-[100px] flex text-[6.5px] font-bold text-[#777] leading-[8px]">
                    <span className="w-[20px] pl-[4px]">1x</span><span className="w-[22px] pl-[2px]">15x</span><span className="w-[22px] pl-[3px]">60x</span><span className="w-[20px] pl-[2px]">300x</span><span className="pl-[3px]">600x</span>
                  </div>
                </div>
              </div>
            </section>
          </div>
        </div>
      </div>
    </div>
  );
}
